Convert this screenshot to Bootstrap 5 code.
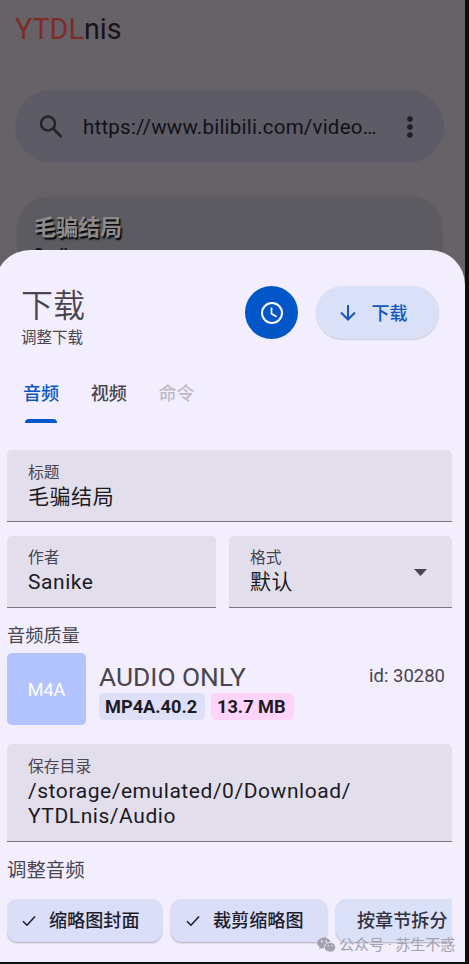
<!DOCTYPE html>
<html lang="zh-CN">
<head>
<meta charset="utf-8">
<meta name="viewport" content="width=device-width, initial-scale=1">
<title>YTDLnis</title>
<link href="https://cdn.jsdelivr.net/npm/bootstrap@5.3.0/dist/css/bootstrap.min.css" rel="stylesheet">
<style>
  body { margin: 0; background: #0d0f0e; font-family: Roboto, "Noto Sans CJK SC", sans-serif; color: #49454f; }
  .screen { width: 465px; height: 962px; background: #676267; }
  .brand { font-size: 28.7px; line-height: 34px; padding: 12px 0 0 15px; color: #16131a; }
  .brand span { color: #7f2c29; }
  .searchbar { margin: 44px 21px 0 15px; height: 73px; border-radius: 37px; background: #5c5b66; padding: 0 21px 0 24px; color: #121118; }
  .searchbar .url { font-size: 20.5px; letter-spacing: .22px; margin-left: 20px; line-height: 28px; padding-top: 1px; }
  .result { margin: 35px 25px 0 20px; height: 120px; border-radius: 28px; background: #5c5b61; box-shadow: 0 1px 4px rgba(0,0,0,.25); padding: 13px 14px; }
  .result-title { font-size: 22px; font-weight: 700; line-height: 33px; color: #8d8b8b; text-shadow: 1.5px 1.5px 1.5px #000; }
  .result-author { font-size: 15px; font-weight: 700; line-height: 18px; padding-top: 1px; color: #111; }

  .sheet { left: -5px; top: 250px; width: 470px; height: 712px; background: #f2eefd; border-radius: 35px 35px 0 0; padding: 36px 13px 0 12px; }
  .head { height: 62px; padding: 0 13px 0 14px; }
  .sheet-title { font-size: 32px; line-height: 40px; font-weight: 350; }
  .sheet-sub { font-size: 15.5px; line-height: 22px; padding-top: 1px; }
  .clock { width: 53px; height: 53px; background: #0356c8; }
  .go { width: 123px; height: 53px; margin-left: 18px; padding-right: 8px; border-radius: 26.5px; background: #d9e0f8; color: #1457bd; font-size: 18px; font-weight: 500; box-shadow: 0 1px 1px rgba(0,0,0,.15); }
  .go span { padding-top: 1px; }
  .tabs { height: 102px; padding: 34px 0 0 16px; gap: 31.5px; font-size: 18.1px; line-height: 24px; font-weight: 500; }
  .tab-on { color: #0d57c4; }
  .tab-on::after { content: ""; display: block; width: 32px; height: 4px; margin: 13px auto 0; background: #0356c8; border-radius: 4px 4px 0 0; }
  .tab-off { color: #bfbac8; }

  .field { background: #e2deec; border-radius: 5px 5px 0 0; border-bottom: 1px solid #79747e; padding: 13px 21px 0; height: 72px; }
  .field-label { font-size: 15.8px; line-height: 20px; }
  .field-value { font-size: 21px; line-height: 25px; letter-spacing: .56px; color: #1c1a22; margin-top: 2px; white-space: nowrap; }
  .pair { gap: 13px; margin-top: 14px; }
  .pair .field { padding-top: 12px; }
  .author { width: 209px; }
  .caret { margin: 21px 4px 0 0; }

  .heading { font-size: 18.2px; line-height: 26px; }
  .quality { margin: 15px 0 4px; }
  .thumb { width: 79px; height: 72px; border-radius: 5px; background: #b3c3ff; color: #fff; font-size: 18px; }
  .fmt { padding: 8px 7px 0 13px; }
  .fmt-name { font-size: 26.3px; line-height: 32px; }
  .fmt-id { font-size: 18.5px; line-height: 24px; padding-top: 3px; }
  .tags { gap: 6px; }
  .tag { font-size: 18.2px; font-weight: 700; line-height: 28px; height: 27px; border-radius: 5px; color: #1c1a22; padding-left: 6px; }
  .codec { width: 106px; background: #dee0fa; }
  .size { width: 83px; background: #ffd3fa; }
  .folder { height: 98px; margin-top: 19px; }

  .adjust { font-size: 19.4px; margin: 16px 0 15px; }
  .chips { gap: 9.5px; padding-bottom: 5px; width: 445px; }
  .chip { height: 43px; border-radius: 11px; background: #dbdef9; color: #1d1c2b; font-size: 18.1px; font-weight: 500; padding-left: 15px; box-shadow: 0 1px 2px rgba(0,0,0,.28); }
  .chip svg { margin-top: 1px; }
  .chip svg + span { margin-left: 13px; }
  .c1 { width: 154.5px; }
  .c2 { width: 155.5px; }
  .c3 { width: 160px; background: #d9e0f8; padding-left: 21px; color: #33323d; }
  .watermark { left: 317px; top: 932px; color: #a4a1ae; font-size: 15px; line-height: 24px; white-space: nowrap; }
  .watermark-text { margin-left: 3px; padding-top: 1px; }
</style>
</head>
<body>
<main class="screen position-relative overflow-hidden">
  <div class="brand"><span>YTDL</span>nis</div>
  <div class="searchbar d-flex align-items-center">
    <svg width="24" height="24" viewBox="0 0 24 24" fill="none" stroke="#25242d" stroke-width="2.6"><circle cx="9" cy="8.500" r="7"/><path d="M14 13.500l8.500 8.500"/></svg>
    <span class="url">https://www.bilibili.com/video…</span>
    <svg class="ms-auto" width="26" height="24" viewBox="0 0 26 24" fill="#1f1e27"><circle cx="13" cy="4" r="2.800"/><circle cx="13" cy="12" r="2.800"/><circle cx="13" cy="20" r="2.800"/></svg>
  </div>
  <div class="result">
    <div class="result-title">毛骗结局</div>
    <div class="result-author">Sanike</div>
  </div>

  <section class="sheet position-absolute">
    <div class="head d-flex">
      <div>
        <div class="sheet-title">下载</div>
        <div class="sheet-sub">调整下载</div>
      </div>
      <div class="clock ms-auto rounded-circle d-flex align-items-center justify-content-center">
        <svg width="24" height="24" viewBox="0 0 24 24" fill="none" stroke="#fff" stroke-width="2"><circle cx="12" cy="12" r="10"/><path d="M11.500 6.500v6.200l5.200 3.100" stroke-width="1.700"/></svg>
      </div>
      <div class="go d-flex align-items-center justify-content-center">
        <svg width="16" height="16" viewBox="0 0 16 16" fill="none" stroke="#1457bd" stroke-width="2"><path d="M8 0v14.400M1 7.500l7 7 7-7"/></svg>
        <span class="ms-3">下载</span>
      </div>
    </div>

    <div class="tabs d-flex">
      <div class="tab-on">音频</div>
      <div>视频</div>
      <div class="tab-off">命令</div>
    </div>

    <div class="field">
      <div class="field-label">标题</div>
      <div class="field-value">毛骗结局</div>
    </div>
    <div class="pair d-flex">
      <div class="field author">
        <div class="field-label">作者</div>
        <div class="field-value">Sanike</div>
      </div>
      <div class="field flex-grow-1 d-flex justify-content-between">
        <div>
          <div class="field-label">格式</div>
          <div class="field-value">默认</div>
        </div>
        <svg class="caret" width="13" height="7" viewBox="0 0 13 7" fill="#49454f"><path d="M0 0h13L6.500 7z"/></svg>
      </div>
    </div>

    <div class="heading quality">音频质量</div>
    <div class="d-flex">
      <div class="thumb d-flex align-items-center justify-content-center">M4A</div>
      <div class="fmt flex-grow-1">
        <div class="d-flex justify-content-between">
          <div class="fmt-name">AUDIO ONLY</div>
          <div class="fmt-id">id: 30280</div>
        </div>
        <div class="d-flex tags">
          <div class="tag codec">MP4A.40.2</div>
          <div class="tag size">13.7 MB</div>
        </div>
      </div>
    </div>

    <div class="field folder">
      <div class="field-label">保存目录</div>
      <div class="field-value">/storage/emulated/0/Download/<br>YTDLnis/Audio</div>
    </div>

    <div class="heading adjust">调整音频</div>
    <div class="chips d-flex overflow-hidden">
      <div class="chip c1 d-flex align-items-center flex-shrink-0">
        <svg width="14" height="12" viewBox="0 0 14 12" fill="none" stroke="#1d1c2b" stroke-width="1.600"><path d="M1 6.200l4 4L13 1.500"/></svg><span>缩略图封面</span>
      </div>
      <div class="chip c2 d-flex align-items-center flex-shrink-0">
        <svg width="14" height="12" viewBox="0 0 14 12" fill="none" stroke="#1d1c2b" stroke-width="1.600"><path d="M1 6.200l4 4L13 1.500"/></svg><span>裁剪缩略图</span>
      </div>
      <div class="chip c3 d-flex align-items-center flex-shrink-0"><span>按章节拆分</span></div>
    </div>
  </section>

  <div class="watermark position-absolute d-flex align-items-center">
    <svg width="19" height="16" viewBox="0 0 19 16"><path fill="#a4a1ae" d="M7 .5C3.200.5.300 3 .300 6c0 1.700.9 3.200 2.400 4.200L2.200 12.200l2.300-1.200c.8.200 1.600.4 2.500.4C10.800 11.400 13.700 9 13.700 6S10.800.500 7 .500z"/><path fill="#a4a1ae" stroke="#f2eefd" stroke-width=".8" d="M13 5.400c-3.200 0-5.600 2.100-5.600 4.800S9.800 15 13 15c.7 0 1.400-.1 2-.3l2 1-.5-1.700c1.300-.9 2.100-2.300 2.100-3.800 0-2.700-2.400-4.800-5.600-4.800z"/><g fill="#f2eefd"><circle cx="4.800" cy="4.400" r=".9"/><circle cx="9.200" cy="4.400" r=".9"/><circle cx="11.200" cy="8.800" r=".75"/><circle cx="14.900" cy="8.800" r=".75"/></g></svg>
    <span class="watermark-text">公众号 · 苏生不惑</span>
  </div>
</main>
<script src="https://cdn.jsdelivr.net/npm/bootstrap@5.3.0/dist/js/bootstrap.bundle.min.js"></script>
</body>
</html>
